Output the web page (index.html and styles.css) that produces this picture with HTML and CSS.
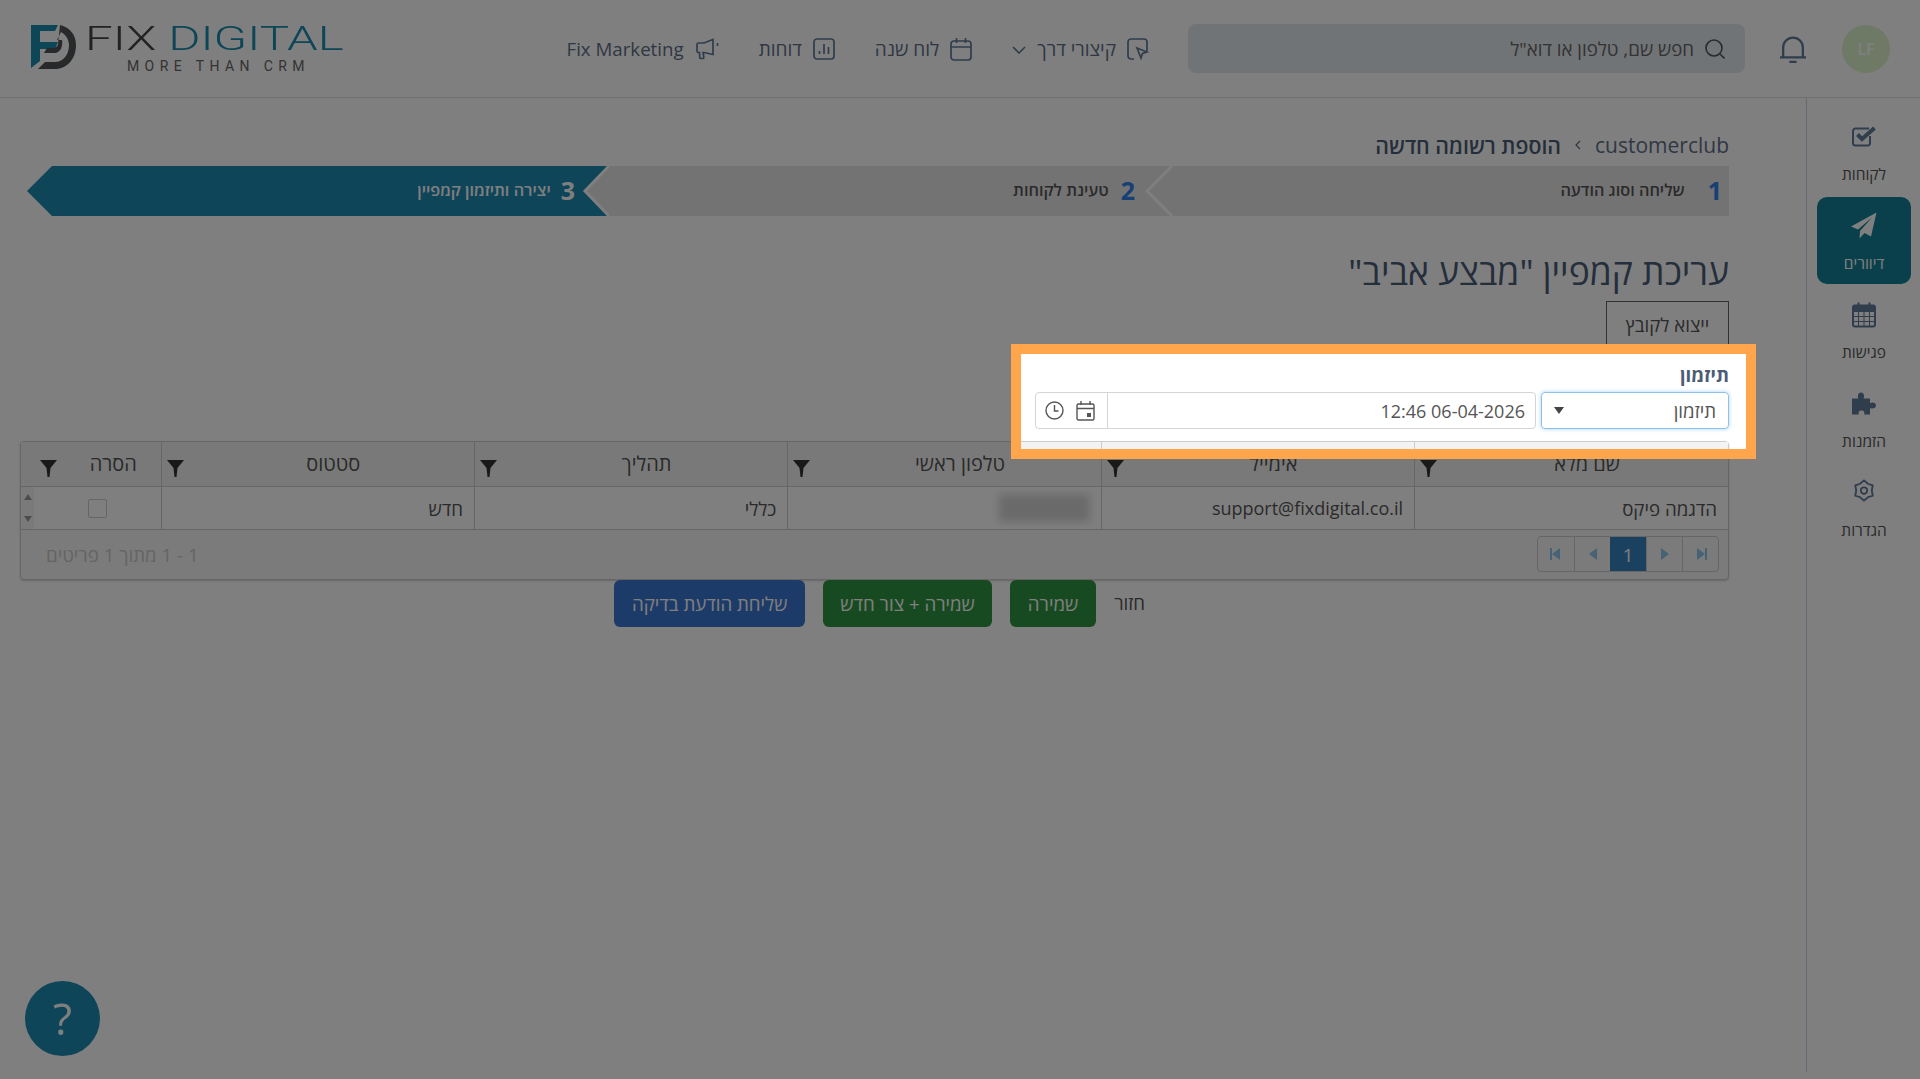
FILE: index.html
```html
<!DOCTYPE html>
<html lang="he" dir="rtl">
<head>
    <meta charset="UTF-8">
    <title>Fix Digital</title>
    <link rel="stylesheet" href="styles.css">
</head>
<body>
    <header class="topbar">
        <div class="avatar">LF</div>
        <svg class="bell" viewBox="0 0 27 27"><path d="M4 21V12a9.500 9.500 0 0 1 19 0v9M1 21.500h25M10 26h7"/></svg>
        <div class="search">
            <svg class="search-icon" viewBox="0 0 20 20"><circle cx="9" cy="9" r="8"/><path d="M15 15l4.500 4.500"/></svg>
            <span>חפש שם, טלפון או דוא"ל</span>
        </div>
        <nav class="nav">
            <a class="nav-item">
                <svg class="nav-icon" viewBox="0 0 22 24"><path d="M7 22H4a3 3 0 0 1-3-3V5a3 3 0 0 1 3-3h13a3 3 0 0 1 3 3v9"/><path d="M10 11l10 4-4.500 1.500L14 21z"/></svg>
                <span>קיצורי דרך</span>
                <svg class="nav-chevron" viewBox="0 0 14 8"><path d="M1 1l6 6 6-6"/></svg>
            </a>
            <a class="nav-item">
                <svg class="nav-icon" viewBox="0 0 22 24"><rect x="1" y="4" width="20" height="19" rx="3"/><path d="M1 10h20M6.500 1v5M15.500 1v5"/></svg>
                <span>לוח שנה</span>
            </a>
            <a class="nav-item">
                <svg class="nav-icon" viewBox="0 0 22 24"><rect x="1" y="2" width="20" height="20" rx="3"/><path d="M6.500 17v-3M11 17V7M15.500 17v-7"/></svg>
                <span>דוחות</span>
            </a>
            <a class="nav-item">
                <svg class="nav-icon nav-icon-wide" viewBox="0 0 24 24"><path d="M2 7.500c0-1 .6-1.500 1.500-1.500H9l9-3.500v15L9 15.500H8l.8 4.500c.2 1-.3 1.500-1.300 1.500H6c-.8 0-1.200-.5-1.300-1.200L4.500 15.500H3.500C2.500 15.500 2 15 2 14zM22.500 6v3"/></svg>
                <span class="latin">Fix Marketing</span>
            </a>
        </nav>
        <div class="logo" dir="ltr">
            <svg class="logo-mark" viewBox="0 0 45 45">
                <path fill="#1a8cac" d="M0 1H27L24 7H9V18H27L24 25H9V37L0 44Z"/>
                <path fill="#4f5255" d="M29 1C38 3 45 10 45 21C45 35 36 45 24 45H7L14 38H24C32 38 38 31 38 21C38 15 34 10 30 8L26 16H31C32 22 30 28 24 29H13L16 24H24C26 23 27 21 27 20Z"/>
            </svg>
            <div class="logo-text">
                <div class="logo-name">FIX <span class="logo-accent">DIGITAL</span></div>
                <div class="logo-sub">MORE THAN CRM</div>
            </div>
        </div>
    </header>

    <div class="layout">
        <aside class="sidebar">
            <a class="side-item">
                <svg class="side-icon" width="25" height="21" viewBox="0 0 25 21"><path class="outline" d="M18 10v7a2.500 2.500 0 0 1-2.500 2.500h-12A2.500 2.500 0 0 1 1 17V5a2.500 2.500 0 0 1 2.500-2.500H17"/><path class="check" d="M5.500 8.500l4.500 4.500L22.500 2"/></svg>
                <span>לקוחות</span>
            </a>
            <a class="side-item is-active">
                <svg class="side-icon" width="26" height="26" viewBox="0 0 26 26"><polygon class="solid" points="25.500,0 0,14 7,17 21,5 9,18.500 8.500,26 13.500,20.500 20,24"/></svg>
                <span>דיוורים</span>
            </a>
            <a class="side-item">
                <svg class="side-icon" width="24" height="26" viewBox="0 0 24 26"><rect class="outline" x="1" y="4" width="22" height="21" rx="2"/><path class="thin" d="M1 10h22M1 15h22M1 20h22M6.500 10v15M12 10v15M17.500 10v15"/><path class="outline" d="M6.500 1v5M17.500 1v5"/><path class="solid" d="M1 4h22v6H1z"/></svg>
                <span>פגישות</span>
            </a>
            <a class="side-item">
                <svg class="side-icon" width="24" height="22" viewBox="0 0 24 22"><path class="solid" d="M0 6H6.500C5 3 6.500 0 9 0s4 3 2.500 6H18v4.500c3-1.500 6 0 6 2.500s-3 4-6 2.500V22H12c1-2 0-4-2.500-4S6 20 7 22H0Z"/></svg>
                <span>הזמנות</span>
            </a>
            <a class="side-item">
                <svg class="side-icon side-icon-cog" width="22" height="24" viewBox="0 0 24 24"><polygon class="outline" points="12,1 16.250,4.640 21.500,6.500 20.500,12 21.500,17.500 16.250,19.360 12,23 7.750,19.360 2.500,17.500 3.500,12 2.500,6.500 7.750,4.640"/><circle class="outline" cx="12" cy="12" r="3.500"/></svg>
                <span>הגדרות</span>
            </a>
        </aside>

        <main class="main">
            <div class="breadcrumb">
                <span>customerclub</span>
                <svg class="crumb-sep" viewBox="0 0 6 10"><path d="M5 1L1 5l4 4"/></svg>
                <strong>הוספת רשומה חדשה</strong>
            </div>

            <div class="steps">
                <div class="step step-first">
                    <span class="step-num">1</span>
                    <span class="step-label">שליחה וסוג הודעה</span>
                    <svg class="step-sep" viewBox="0 0 30 50"><path d="M27 0L2 25l25 25"/></svg>
                </div>
                <div class="step step-second">
                    <span class="step-num">2</span>
                    <span class="step-label">טעינת לקוחות</span>
                </div>
                <div class="step step-current">
                    <span class="step-num">3</span>
                    <span class="step-label">יצירה ותיזמון קמפיין</span>
                    <svg class="step-notch" viewBox="0 0 30 50"><polygon points="30,0 6,25 30,50"/><path d="M30 0L6 25l24 25"/></svg>
                </div>
            </div>

            <h1 class="page-title">עריכת קמפיין "מבצע אביב"</h1>
            <button class="export-btn">ייצוא לקובץ</button>

            <div class="schedule">
                <label class="schedule-label">תיזמון</label>
                <div class="schedule-row">
                    <div class="select-box">
                        <span>תיזמון</span>
                        <span class="select-caret"></span>
                    </div>
                    <div class="date-box">
                        <span class="date-value latin">12:46 06-04-2026</span>
                        <div class="date-icons">
                            <svg class="date-icon" width="19" height="20" viewBox="0 0 19 20"><rect x="1" y="3" width="17" height="16" rx="1.500"/><path d="M1 7.500h17M5 0v4M14 0v4"/><rect class="date-dot" x="11" y="12" width="4" height="4"/></svg>
                            <svg class="date-icon" width="19" height="19" viewBox="0 0 19 19"><circle cx="9.500" cy="9.500" r="8.500"/><path d="M9.500 4v6h4"/></svg>
                        </div>
                    </div>
                </div>
            </div>

            <div class="grid">
                <table class="grid-table">
                    <colgroup>
                        <col class="col-main"><col class="col-main"><col class="col-main"><col class="col-main"><col class="col-main"><col>
                    </colgroup>
                    <thead>
                        <tr>
                            <th><div class="th-inner"><span>שם מלא</span><svg class="filter" viewBox="0 0 17 17"><path d="M0 0h17L10.500 8 9.500 17h-2L6.500 8z"/></svg></div></th>
                            <th><div class="th-inner"><span>אימייל</span><svg class="filter" viewBox="0 0 17 17"><path d="M0 0h17L10.500 8 9.500 17h-2L6.500 8z"/></svg></div></th>
                            <th><div class="th-inner"><span>טלפון ראשי</span><svg class="filter" viewBox="0 0 17 17"><path d="M0 0h17L10.500 8 9.500 17h-2L6.500 8z"/></svg></div></th>
                            <th><div class="th-inner"><span>תהליך</span><svg class="filter" viewBox="0 0 17 17"><path d="M0 0h17L10.500 8 9.500 17h-2L6.500 8z"/></svg></div></th>
                            <th><div class="th-inner"><span>סטטוס</span><svg class="filter" viewBox="0 0 17 17"><path d="M0 0h17L10.500 8 9.500 17h-2L6.500 8z"/></svg></div></th>
                            <th class="th-last"><div class="th-inner"><span>הסרה</span><svg class="filter" viewBox="0 0 17 17"><path d="M0 0h17L10.500 8 9.500 17h-2L6.500 8z"/></svg></div></th>
                        </tr>
                    </thead>
                    <tbody>
                        <tr>
                            <td>הדגמה פיקס</td>
                            <td class="latin">support@fixdigital.co.il</td>
                            <td><div class="blurred"></div></td>
                            <td>כללי</td>
                            <td>חדש</td>
                            <td class="td-remove">
                                <div class="remove-cell">
                                    <span class="checkbox"></span>
                                    <div class="scroll-arrows"><i class="arrow-up"></i><i class="arrow-down"></i></div>
                                </div>
                            </td>
                        </tr>
                    </tbody>
                </table>
                <div class="grid-footer">
                    <div class="pager" dir="ltr">
                        <span class="page-link"><i class="tri-left bar-left"></i></span>
                        <span class="page-link"><i class="tri-left"></i></span>
                        <span class="page-link is-current">1</span>
                        <span class="page-link"><i class="tri-right"></i></span>
                        <span class="page-link"><i class="tri-right bar-right"></i></span>
                    </div>
                    <span class="pager-info">1 - 1 מתוך 1 פריטים</span>
                </div>
            </div>

            <div class="actions">
                <a class="back-link">חזור</a>
                <button class="btn btn-green">שמירה</button>
                <button class="btn btn-green btn-narrow">שמירה + צור חדש</button>
                <button class="btn btn-blue">שליחת הודעת בדיקה</button>
            </div>
        </main>
    </div>

    <div class="help-btn">?</div>
    <div class="tour-highlight"></div>
</body>
</html>
```

FILE: styles.css
```css
* {
    box-sizing: border-box;
}
html, body {
    height: 1079px;
    overflow: hidden;
}
body {
    margin: 0;
    background-color: #fff;
    color: #555;
    font-family: "Open Sans", "Noto Sans", "Liberation Sans", sans-serif;
    font-size: 18.700px;
}
svg {
    display: block;
    flex: none;
}
.latin {
    font-size: 18px;
}

/* top bar */
.topbar {
    display: flex;
    align-items: center;
    height: 98px;
    padding: 0 30px 0 31px;
    border-bottom: 1px solid #dedede;
}
.avatar {
    display: flex;
    align-items: center;
    justify-content: center;
    width: 48px;
    height: 48px;
    border-radius: 50%;
    background-color: #dff5cc;
    color: #fff;
    font-size: 16px;
    font-weight: 600;
    margin-left: 35px;
}
.bell {
    width: 28px;
    height: 28px;
    margin-left: 34px;
    fill: none;
    stroke: #5f7a9a;
    stroke-width: 2.200;
}
.search {
    display: flex;
    align-items: center;
    gap: 11px;
    width: 557px;
    height: 49px;
    padding-right: 20px;
    margin-left: 39px;
    border-radius: 8px;
    background-color: #e3e8ed;
    color: #666;
}
.search-icon {
    width: 20px;
    height: 20px;
    fill: none;
    stroke: #555;
    stroke-width: 1.600;
}
.nav {
    display: flex;
    align-items: center;
    gap: 40px;
}
.nav-item {
    display: flex;
    align-items: center;
    gap: 11px;
    color: #5f6f88;
    font-size: 19px;
    font-weight: 500;
}
.nav-item .latin {
    font-size: 18.700px;
}
.nav-icon {
    width: 22px;
    height: 24px;
    fill: none;
    stroke: #5f7a9a;
    stroke-width: 1.700;
}
.nav-icon-wide {
    width: 24px;
    height: 26px;
}
.nav-chevron {
    width: 14px;
    height: 8px;
    margin-top: 3px;
    fill: none;
    stroke: #5f7a9a;
    stroke-width: 1.600;
}
.logo {
    display: flex;
    align-items: flex-start;
    gap: 9px;
    margin-right: auto;
}
.logo-mark {
    width: 45px;
    height: 45px;
}
.logo-text {
    width: 256px;
}
.logo-name {
    width: 176px;
    margin-top: -3px;
    font-family: Roboto, sans-serif;
    font-size: 33px;
    font-weight: 300;
    line-height: 36px;
    white-space: nowrap;
    color: #444;
    transform: scaleX(1.490);
    transform-origin: left center;
}
.logo-accent {
    color: #1a8cac;
}
.logo-sub {
    margin: 2px 0 0 42px;
    font-family: Roboto, sans-serif;
    font-size: 14px;
    line-height: 14px;
    letter-spacing: 5.400px;
    white-space: nowrap;
    color: #666;
}

/* page body */
.layout {
    display: flex;
    align-items: flex-start;
}
.sidebar {
    display: flex;
    flex-direction: column;
    gap: 2px;
    width: 114px;
    height: 974px;
    padding: 10px 9px 0 10px;
    border-left: 1px solid #d5d5ef;
}
.side-item {
    display: flex;
    flex-direction: column;
    align-items: center;
    height: 87px;
    padding-top: 12px;
    border-radius: 10px;
    font-size: 15.500px;
    line-height: 20px;
    color: #555;
}
.side-item.is-active {
    background-color: #128096;
    color: #fff;
}
.side-icon {
    height: 33px;
    margin-bottom: 11px;
}
.side-icon-cog {
    height: 29px;
    margin-bottom: 15px;
}
.side-icon .outline {
    fill: none;
    stroke: #5f7a9a;
    stroke-width: 2;
}
.side-icon .thin {
    fill: none;
    stroke: #5f7a9a;
    stroke-width: 1;
}
.side-icon .check {
    fill: none;
    stroke: #5f7a9a;
    stroke-width: 4;
}
.side-icon .solid {
    fill: #5f7a9a;
}
.is-active .side-icon .solid {
    fill: #fff;
}
.main {
    flex: 1;
    padding: 34px 77px 0 20px;
}

.breadcrumb {
    display: flex;
    align-items: center;
    gap: 14px;
    height: 26px;
    margin-bottom: 8px;
    font-size: 21px;
    color: #5f6f88;
}
.breadcrumb strong {
    font-size: 21.300px;
    font-weight: 600;
    color: #4a5c76;
}
.crumb-sep {
    width: 6px;
    height: 10px;
    fill: none;
    stroke: #5f6f88;
    stroke-width: 1.200;
}

/* wizard steps */
.steps {
    display: grid;
    grid-template-columns: 557px 563px 582px;
    height: 50px;
    margin-left: 6px;
}
.step {
    position: relative;
    display: flex;
    align-items: center;
    gap: 12px;
    padding-bottom: 3px;
    background-color: #e6e6e6;
    color: #555;
    font-size: 16.300px;
    font-weight: 600;
}
.step-first {
    gap: 23px;
    padding-right: 7px;
}
.step-second {
    padding-right: 37px;
}
.step-current {
    gap: 10px;
    padding-right: 34px;
    background: none;
    color: #fff;
}
.step-current::before {
    content: "";
    position: absolute;
    top: 0;
    right: 0;
    bottom: 0;
    left: 0;
    background-color: #1e8ab2;
    clip-path: polygon(25px 0, 100% 0, 100% 100%, 25px 100%, 0 50%);
}
.step-num {
    position: relative;
    font-size: 25px;
    font-weight: 700;
    color: #2f80e8;
}
.step-label {
    position: relative;
}
.step-current .step-num {
    color: #fff;
}
.step-sep {
    position: absolute;
    z-index: 1;
    top: 0;
    left: -27px;
    width: 30px;
    height: 50px;
    fill: none;
    stroke: #fff;
    stroke-width: 3;
}
.step-notch {
    position: absolute;
    top: 0;
    right: 0;
    width: 30px;
    height: 50px;
    fill: #e6e6e6;
}
.step-notch path {
    fill: none;
    stroke: #fff;
    stroke-width: 3;
}

.page-title {
    margin: 35px 0 10px;
    font-size: 35.500px;
    font-weight: 500;
    line-height: 40px;
    color: #4a5c76;
}
.export-btn {
    display: block;
    width: 123px;
    height: 48px;
    padding: 0 0 2px;
    border: 1px solid #666;
    background: none;
    color: #555;
    font: inherit;
}

/* schedule form */
.schedule {
    margin-top: 15px;
}
.schedule-label {
    display: block;
    height: 22px;
    margin-bottom: 6px;
    font-weight: 700;
    line-height: 22px;
    color: #4a5c76;
}
.schedule-row {
    display: flex;
    gap: 5px;
    height: 37px;
}
.select-box {
    display: flex;
    align-items: center;
    justify-content: space-between;
    width: 188px;
    padding: 0 12px;
    border: 1px solid #8fc0ea;
    border-radius: 4px;
    box-shadow: 0 0 4px #a9d2f2;
}
.select-caret {
    border-top: 7px solid #444;
    border-left: 5px solid transparent;
    border-right: 5px solid transparent;
}
.date-box {
    display: flex;
    align-items: center;
    justify-content: space-between;
    width: 501px;
    border: 1px solid #d5d5d5;
    border-radius: 4px;
}
.date-value {
    padding-right: 10px;
    direction: ltr;
}
.date-icons {
    display: flex;
    align-items: center;
    gap: 12px;
    width: 72px;
    height: 100%;
    padding: 0 12px 0 0;
    border-right: 1px solid #d5d5d5;
}
.date-icon {
    fill: none;
    stroke: #555;
    stroke-width: 1.400;
}
.date-icon .date-dot {
    fill: #555;
    stroke: none;
}

/* grid */
.grid {
    margin-top: 12px;
    border: 1px solid #ccc;
    border-radius: 4px;
    background-color: #f7f7f7;
    box-shadow: 0 1px 2px rgba(0, 0, 0, .2);
}
.grid-table {
    width: 100%;
    border-collapse: collapse;
    table-layout: fixed;
}
.col-main {
    width: 313.400px;
}
.grid-table th {
    height: 44px;
    padding: 0;
    border-bottom: 1px solid #ccc;
    border-left: 1px solid #ccc;
    background-color: #f3f3f3;
    font-size: 20px;
    font-weight: 400;
}
.grid-table th:last-child,
.grid-table td:last-child {
    border-left: none;
}
.th-inner {
    display: flex;
    align-items: center;
    height: 44px;
}
.th-inner span {
    flex: 1;
    padding-bottom: 2px;
    text-align: center;
}
.filter {
    width: 17px;
    height: 17px;
    margin: 9px 9px 0 5px;
    fill: #333;
}
.th-last .filter {
    margin-left: 19px;
}
.grid-table td {
    height: 43px;
    padding: 0 11px;
    border-bottom: 1px solid #ccc;
    border-left: 1px solid #ccc;
    background-color: #fff;
    color: #555;
}
.blurred {
    width: 91px;
    height: 28px;
    background-color: #d4d4d4;
    filter: blur(5px);
}
.grid-table td.td-remove {
    padding: 0;
}
.remove-cell {
    display: flex;
    align-items: center;
    height: 42px;
}
.checkbox {
    width: 19px;
    height: 19px;
    margin: 0 auto;
    border: 1px solid #ccc;
    border-radius: 2px;
    background-color: #fff;
}
.scroll-arrows {
    display: flex;
    flex-direction: column;
    justify-content: space-between;
    align-items: center;
    width: 13px;
    height: 100%;
    padding: 7px 0;
    background-color: #f5f5f5;
}
.arrow-up,
.arrow-down {
    border-left: 4px solid transparent;
    border-right: 4px solid transparent;
}
.arrow-up {
    border-bottom: 6px solid #999;
}
.arrow-down {
    border-top: 6px solid #999;
}
.grid-footer {
    display: flex;
    align-items: center;
    justify-content: space-between;
    height: 49px;
    padding: 0 9px 1px 25px;
}
.pager {
    display: flex;
    height: 36px;
    border: 1px solid #ccc;
    border-radius: 4px;
}
.page-link {
    display: flex;
    align-items: center;
    justify-content: center;
    width: 36px;
    border-left: 1px solid #ccc;
}
.page-link:first-child {
    border-left: none;
}
.page-link.is-current {
    background-color: #3583be;
    border-left: none;
    color: #fff;
}
.tri-left,
.tri-right {
    border-top: 6px solid transparent;
    border-bottom: 6px solid transparent;
}
.tri-left {
    border-right: 8px solid #8cc4ec;
}
.tri-right {
    border-left: 8px solid #8cc4ec;
}
.bar-left {
    box-shadow: -2px 0 0 #8cc4ec;
}
.bar-right {
    box-shadow: 2px 0 0 #8cc4ec;
}
.pager-info {
    color: #c8c8c8;
}

/* buttons */
.actions {
    display: flex;
    align-items: center;
    height: 47px;
    padding-right: 584px;
}
.back-link {
    margin: 0 0 3px 18px;
    color: #555;
}
.btn {
    height: 47px;
    padding: 0 18px;
    margin-left: 18px;
    border: none;
    border-radius: 6px;
    color: #fff;
    font: inherit;
}
.btn-narrow {
    padding: 0 17px;
}
.btn-green {
    background-color: #2e9440;
}
.btn-blue {
    background-color: #3b76d2;
}

.help-btn {
    position: fixed;
    left: 25px;
    top: 981px;
    width: 75px;
    height: 75px;
    border-radius: 50%;
    background-color: #1e8ab2;
    color: #fff;
    font-size: 44px;
    line-height: 75px;
    text-align: center;
}

/* guided tour cut-out over the page */
.tour-highlight {
    position: fixed;
    z-index: 10;
    left: 1011px;
    top: 344px;
    width: 745px;
    height: 115px;
    border: 10px solid #ffa64d;
    box-shadow: 0 0 0 3000px rgba(0, 0, 0, .5);
}
```
